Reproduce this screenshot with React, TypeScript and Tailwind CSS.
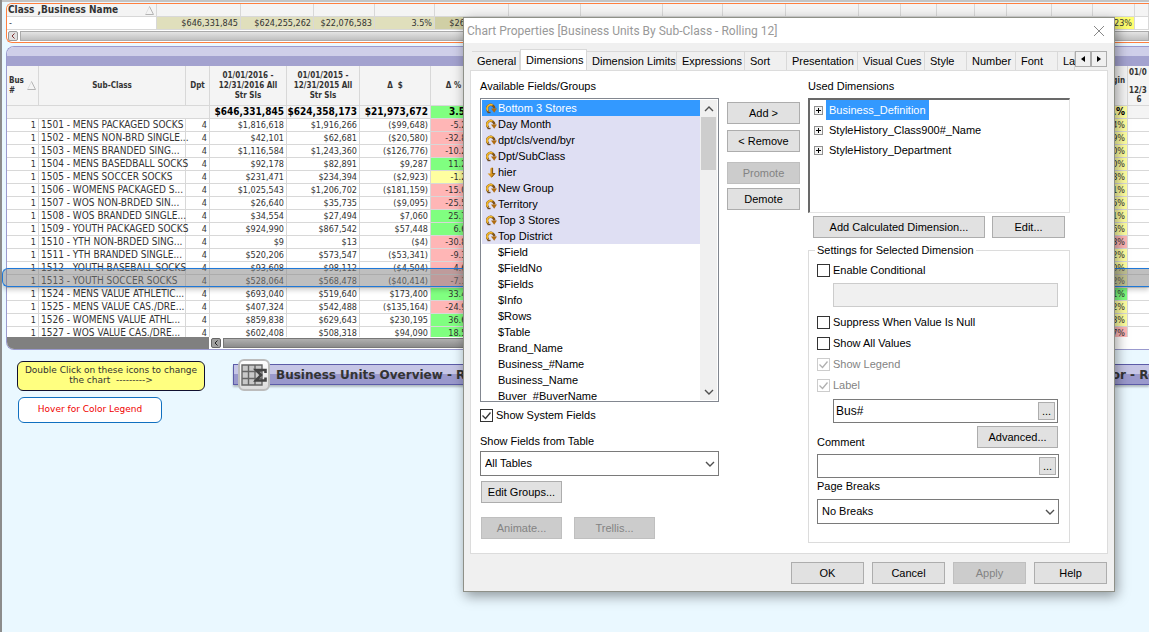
import type { ReactNode } from "react";

const DIALOG_FONT = "font-['Liberation_Sans',sans-serif]";
const SHEET_FONT = "font-['DejaVu_Sans_Condensed','DejaVu_Sans',sans-serif]";

const tones = {
  red: "bg-[#ffb6b6]",
  green: "bg-[#80ff80]",
  yellow: "bg-[#ffffa0]",
};

type Tone = keyof typeof tones;

type Row = {
  name: string;
  current: string;
  previous: string;
  delta: string;
  percent: string;
  tone: Tone;
  margin: string;
  marginTone: Tone;
};

const rows: Row[] = [
  { name: "1501 - MENS PACKAGED SOCKS", current: "$1,816,618", previous: "$1,916,266", delta: "($99,648)", percent: "-5.2%", tone: "red", margin: "0.4%", marginTone: "yellow" },
  { name: "1502 - MENS NON-BRD SINGLE...", current: "$42,101", previous: "$62,681", delta: "($20,580)", percent: "-32.8%", tone: "red", margin: "0.9%", marginTone: "yellow" },
  { name: "1503 - MENS BRANDED SING...", current: "$1,116,584", previous: "$1,243,360", delta: "($126,776)", percent: "-10.2%", tone: "red", margin: "1.0%", marginTone: "yellow" },
  { name: "1504 - MENS BASEDBALL SOCKS", current: "$92,178", previous: "$82,891", delta: "$9,287", percent: "11.2%", tone: "green", margin: "1.0%", marginTone: "yellow" },
  { name: "1505 - MENS SOCCER SOCKS", current: "$231,471", previous: "$234,394", delta: "($2,923)", percent: "-1.2%", tone: "yellow", margin: "0.8%", marginTone: "yellow" },
  { name: "1506 - WOMENS PACKAGED S...", current: "$1,025,543", previous: "$1,206,702", delta: "($181,159)", percent: "-15.0%", tone: "red", margin: "1.1%", marginTone: "yellow" },
  { name: "1507 - WOS NON-BRDED SIN...", current: "$26,640", previous: "$35,735", delta: "($9,095)", percent: "-25.5%", tone: "red", margin: "0.5%", marginTone: "yellow" },
  { name: "1508 - WOS BRANDED SINGLE...", current: "$34,554", previous: "$27,494", delta: "$7,060", percent: "25.7%", tone: "green", margin: "1.1%", marginTone: "yellow" },
  { name: "1509 - YOUTH PACKAGED SOCKS", current: "$924,990", previous: "$867,542", delta: "$57,448", percent: "6.6%", tone: "green", margin: "0.6%", marginTone: "yellow" },
  { name: "1510 - YTH NON-BRDED SING...", current: "$9", previous: "$13", delta: "($4)", percent: "-30.8%", tone: "red", margin: "3.3%", marginTone: "red" },
  { name: "1511 - YTH BRANDED SINGLE...", current: "$520,206", previous: "$573,547", delta: "($53,341)", percent: "-9.3%", tone: "red", margin: "0.2%", marginTone: "yellow" },
  { name: "1512 - YOUTH BASEBALL SOCKS", current: "$93,608", previous: "$98,112", delta: "($4,504)", percent: "-4.6%", tone: "red", margin: "1.0%", marginTone: "yellow" },
  { name: "1513 - YOUTH SOCCER SOCKS", current: "$528,064", previous: "$568,478", delta: "($40,414)", percent: "-7.1%", tone: "red", margin: "0.2%", marginTone: "yellow" },
  { name: "1524 - MENS VALUE ATHLETIC...", current: "$693,040", previous: "$519,640", delta: "$173,400", percent: "33.4%", tone: "green", margin: "3.1%", marginTone: "green" },
  { name: "1525 - MENS VALUE CAS./DRE...", current: "$407,324", previous: "$542,488", delta: "($135,164)", percent: "-24.9%", tone: "red", margin: "0.2%", marginTone: "yellow" },
  { name: "1526 - WOMENS VALUE ATHL...", current: "$859,838", previous: "$629,643", delta: "$230,195", percent: "36.6%", tone: "green", margin: "0.3%", marginTone: "yellow" },
  { name: "1527 - WOS VALUE CAS./DRE...", current: "$602,408", previous: "$508,318", delta: "$94,090", percent: "18.5%", tone: "green", margin: "4.7%", marginTone: "red" },
];

const tabs = [
  { label: "General", width: "w-[48px]" },
  { label: "Dimensions", width: "w-[67px]", active: true },
  { label: "Dimension Limits", width: "w-[90px]" },
  { label: "Expressions", width: "w-[68px]" },
  { label: "Sort", width: "w-[42px]" },
  { label: "Presentation", width: "w-[71px]" },
  { label: "Visual Cues", width: "w-[67px]" },
  { label: "Style", width: "w-[42px]" },
  { label: "Number", width: "w-[49px]" },
  { label: "Font", width: "w-[42px]" },
  { label: "La", width: "w-[17px]" },
];

const groups = ["Bottom 3 Stores", "Day Month", "dpt/cls/vend/byr", "Dpt/SubClass", "hier", "New Group", "Territory", "Top 3 Stores", "Top District"];
const fields = ["$Field", "$FieldNo", "$Fields", "$Info", "$Rows", "$Table", "Brand_Name", "Business_#Name", "Business_Name", "Buyer_#BuyerName"];
const usedDimensions = ["Business_Definition", "StyleHistory_Class900#_Name", "StyleHistory_Department"];

function CycleIcon() {
  return (
    <svg width="11" height="11" viewBox="0 0 11 11" className="shrink-0">
      <path d="M2.6 8.6A3.7 3.7 0 1 1 8.4 5.6" fill="none" stroke="#80541a" strokeWidth="2.4" />
      <path d="M2 7.8A3.8 3.8 0 0 1 6.6 2" fill="none" stroke="#f3b92c" strokeWidth="1.7" />
      <path d="M5 5.6H11L8.2 9.8Z" fill="#b06c10" />
      <path d="M1.500 9.500H4.500" stroke="#6b4a22" strokeWidth="1.4" />
    </svg>
  );
}

function DrillIcon() {
  return (
    <svg width="11" height="11" viewBox="0 0 11 11" className="shrink-0">
      <path d="M6.5 0v6h3L5.6 10.800 1.6 6.400h2.800V1.500Z" fill="#d8951f" />
      <path d="M6.6 1v5.6h2.2L5.6 10.2" fill="none" stroke="#7a4f12" strokeWidth="1" />
    </svg>
  );
}

function Chevron({ up = false }: { up?: boolean }) {
  return (
    <svg width="10" height="6" viewBox="0 0 10 6" className={up ? "rotate-180" : ""}>
      <path d="M1 1l4 4 4-4" fill="none" stroke="#505050" strokeWidth="1.4" />
    </svg>
  );
}

function SortMark() {
  return (
    <svg width="9" height="9" viewBox="0 0 9 9" className="shrink-0">
      <path d="M4.5 .5L.5 8.5" stroke="#e0e0e0" />
      <path d="M4.5 .5L8.5 8.5H.5" fill="none" stroke="#b4b4b4" />
    </svg>
  );
}

function ScrollLeft({ dark = false }: { dark?: boolean }) {
  return (
    <button
      type="button"
      aria-label="Scroll left"
      className={`flex h-[10px] w-[10px] shrink-0 items-center justify-center rounded-xs border ${dark ? "border-[#666] bg-[#a0a0a0]" : "border-[#999] bg-[#e0e0e0]"}`}
    >
      <svg width="4" height="6" viewBox="0 0 4 6">
        <path d="M3.5 .5L1 3l2.5 2.5" fill="none" stroke={dark ? "#222" : "#803030"} />
      </svg>
    </button>
  );
}

function Button({ children, width = "w-[73px]", disabled = false }: { children: ReactNode; width?: string; disabled?: boolean }) {
  return (
    <button
      type="button"
      disabled={disabled}
      className={`h-[22px] shrink-0 border text-center whitespace-nowrap ${width} ${disabled ? "border-[#bfbfbf] bg-[#ccc] text-[#838383]" : "border-[#adadad] bg-[#e1e1e1]"}`}
    >
      {children}
    </button>
  );
}

function Checkbox({ label, checked = false, disabled = false }: { label: string; checked?: boolean; disabled?: boolean }) {
  return (
    <label className={`relative flex h-[14px] items-center gap-[3px] ${disabled ? "text-[#838383]" : ""}`}>
      <input
        type="checkbox"
        defaultChecked={checked}
        disabled={disabled}
        className={`peer h-[13px] w-[13px] shrink-0 appearance-none border bg-white ${disabled ? "border-[#ccc]" : "border-[#333]"}`}
      />
      <svg width="13" height="13" viewBox="0 0 13 13" className="pointer-events-none absolute left-0 hidden peer-checked:block">
        <path d="M2.5 6.5l3 3 5-6" fill="none" stroke={disabled ? "#b0b0b0" : "#333"} strokeWidth="1.3" />
      </svg>
      {label}
    </label>
  );
}

function Dropdown({ id, value }: { id: string; value: string }) {
  return (
    <div className="relative">
      <select id={id} className="block h-[25px] w-full appearance-none border border-[#7a7a7a] bg-white px-1">
        <option>{value}</option>
      </select>
      <span className="pointer-events-none absolute inset-y-0 right-1 flex items-center">
        <Chevron />
      </span>
    </div>
  );
}

function ExpressionBox({ label, id, value = "" }: { label: string; id: string; value?: string }) {
  return (
    <div className="flex h-[24px] items-center border border-[#7a7a7a] bg-white pr-[2px]">
      <input id={id} aria-label={label} defaultValue={value} className="h-5 min-w-0 flex-1 px-[2px] text-[12px] outline-none" />
      <button type="button" aria-label={`Edit ${label}`} className="h-[18px] w-[17px] border border-[#adadad] bg-[#e1e1e1] leading-4">
        ...
      </button>
    </div>
  );
}

function SummaryPanel() {
  const base = "h-[13px] border-r border-b border-[#d8d8d8] p-0";
  const cell = `${base} pr-[2px] text-right`;
  const hidden = ["w-[72px]", "w-[82px]", "w-[60px]", "w-[63px]", "w-[73px]", "w-[42px]", "w-[36px]", "w-[38px]", "w-[32px]", "w-[45px]"];
  return (
    <section className="overflow-hidden rounded-l-md border border-r-0 border-[#ff7f3f] bg-white">
      <table className="w-full table-fixed border-separate border-spacing-0 text-[9px] leading-[12px] whitespace-nowrap text-[#333]">
        <thead>
          <tr className="bg-[#f4f4f4]">
            <th className={`${cell} w-[150px] text-[10px]`}>
              <div className="flex items-center justify-between pl-px">
                Class ,Business Name
                <SortMark />
              </div>
            </th>
            <th className={`${cell} w-[84px]`} />
            <th className={`${cell} w-[73px]`} />
            <th className={`${cell} w-[61px]`} />
            <th className={`${cell} w-[60px]`} />
            <th className={`${cell} w-[74px]`} />
            {hidden.map((width, i) => (
              <th key={i} className={`${cell} ${width}`} />
            ))}
            <th className={cell} />
            <th className={`${cell} w-[42px]`} />
            <th className={`${cell} w-[14px]`} />
          </tr>
        </thead>
        <tbody>
          <tr>
            <td className={`${base} text-left`}>
              <span className="pl-[2px]">-</span>
            </td>
            <td className={`${cell} bg-[#e0dfbc]`}>$646,331,845</td>
            <td className={`${cell} bg-[#e0dfbc]`}>$624,255,262</td>
            <td className={`${cell} bg-[#e0dfbc]`}>$22,076,583</td>
            <td className={`${cell} bg-[#e0dfbc]`}>3.5%</td>
            <td className={`${cell} bg-[#d0cfa5]`}>$264,071,182</td>
            {hidden.map((_, i) => (
              <td key={i} className={cell} />
            ))}
            <td className={cell} />
            <td className={`${cell} bg-[#ffff70]`}>0.23%</td>
            <td className={cell} />
          </tr>
        </tbody>
      </table>
      <div className="flex h-[12px] items-center gap-[2px] pl-px">
        <ScrollLeft />
        <div className="h-[10px] flex-1 border border-[#aaa] bg-linear-to-b from-[#e4e4e4] to-[#c0c0c0]" />
      </div>
    </section>
  );
}

function SubClassPanel() {
  const head = "h-[40px] border-r border-b border-[#d8d8d8] px-[2px] py-0 text-center font-bold";
  const base = "h-[13px] border-b border-[#d8d8d8] p-0";
  const cell = `${base} border-r pr-[2px] text-right`;
  return (
    <section className="relative">
      <div className="overflow-hidden rounded-l-lg border border-r-0 border-[#9a9ace] bg-white">
        <div className="h-[19px] bg-linear-to-b from-[#cfcfe9] from-45% to-[#a3a2cf] to-50%" />
        <div className="h-[271px] overflow-hidden">
          <table className="w-full table-fixed border-separate border-spacing-0 text-[9px] leading-[12px] whitespace-nowrap text-[#333]">
            <thead>
              <tr className="bg-[#f4f4f4] text-[8px] leading-[10px]">
                <th className={`${head} w-[32px]`}>
                  <div className="flex items-center justify-between text-left">
                    <span>
                      Bus
                      <br />#
                    </span>
                    <SortMark />
                  </div>
                </th>
                <th className={`${head} w-[147px]`}>Sub-Class</th>
                <th className={`${head} w-[24px]`}>Dpt</th>
                <th className={`${head} w-[77px]`}>
                  01/01/2016 -<br />
                  12/31/2016 All
                  <br />
                  Str Sls
                </th>
                <th className={`${head} w-[73px]`}>
                  01/01/2015 -<br />
                  12/31/2015 All
                  <br />
                  Str Sls
                </th>
                <th className={`${head} w-[71px]`}>Δ&nbsp; $</th>
                <th className={`${head} w-[46px]`}>Δ %</th>
                <th className={head} />
                <th className={`${head} w-[44px]`}>
                  <div className="pb-[10px] text-right">Margin</div>
                </th>
                <th className="h-[40px] w-[21px] border-b border-[#d8d8d8] py-0 pr-0 pl-px text-left leading-[9px] font-bold">
                  01/0
                  <br />
                  <br />
                  12/3
                  <br />
                  &nbsp;&nbsp; 6
                </th>
              </tr>
            </thead>
            <tbody>
              <tr className="bg-[#f4f4f4] text-[10px] font-bold text-black">
                <td className={base} />
                <td className={base} />
                <td className={cell} />
                <td className={cell}>$646,331,845</td>
                <td className={cell}>$624,358,173</td>
                <td className={cell}>$21,973,672</td>
                <td className={`${cell} ${tones.green}`}>3.5%</td>
                <td className={cell} />
                <td className={`${cell} ${tones.yellow}`}>0.1%</td>
                <td className={base} />
              </tr>
              {rows.map((row) => (
                <tr key={row.name}>
                  <td className={cell}>1</td>
                  <td className={`${base} border-r text-left text-[10px]`}>
                    <span className="pl-[2px]">{row.name}</span>
                  </td>
                  <td className={cell}>4</td>
                  <td className={cell}>{row.current}</td>
                  <td className={cell}>{row.previous}</td>
                  <td className={cell}>{row.delta}</td>
                  <td className={`${cell} ${tones[row.tone]}`}>{row.percent}</td>
                  <td className={cell} />
                  <td className={`${cell} ${tones[row.marginTone]}`}>{row.margin}</td>
                  <td className={base} />
                </tr>
              ))}
            </tbody>
          </table>
        </div>
        <div className="flex h-[12px] items-center gap-[2px]">
          <div className="h-full w-[202px] shrink-0 bg-[#808080]" />
          <ScrollLeft dark />
          <div className="h-[10px] w-2/3 border border-[#777] bg-linear-to-b from-[#b0b0b0] to-[#8c8c8c]" />
        </div>
      </div>
      <div className="absolute top-[222px] right-0 -left-1 h-[19px] rounded-l-md border border-r-0 border-[#1f78d8] bg-[#808080]/50 shadow-[0_3px_5px_rgba(0,0,0,0.2)]" />
    </section>
  );
}

function ChartBar({ title, children }: { title: string; children?: ReactNode }) {
  return (
    <div className="flex h-[21px] items-center gap-[6px] border border-r-0 border-[#5c5ca8] bg-linear-to-b from-[#c6c6e6] from-45% to-[#9a99cc] to-50% pl-1 shadow-[0_2px_2px_rgba(0,0,0,0.25)]">
      {children}
      <h2 className="font-['DejaVu_Sans',sans-serif] text-[12px] font-bold whitespace-nowrap text-[#333]">{title}</h2>
    </div>
  );
}

function MinimizedCharts() {
  return (
    <section className="flex items-start pt-[11px] pl-[11px]">
      <div className="flex w-[188px] flex-col items-start gap-[6px] font-['DejaVu_Sans',sans-serif]">
        <p className="h-[30px] w-full rounded-md border border-[#101030] bg-[#ffff80] pt-[3px] text-center text-[9px] leading-[10px] text-[#333]">
          Double Click on these icons to change
          <br />
          the chart &nbsp;---------&gt;
        </p>
        <button type="button" className="ml-px h-[26px] w-[144px] rounded-md border border-[#1070c0] bg-white text-[9px] text-[#f00000]">
          Hover for Color Legend
        </button>
      </div>
      <div className="ml-[28px] min-w-0 flex-1 pt-[3px]">
        <ChartBar title="Business Units Overview - Rolling 12">
          <button type="button" aria-label="Restore chart" className="flex h-[32px] w-[32px] shrink-0 items-center justify-center rounded-md border-2 border-[#bcbcbc] bg-linear-to-b from-white to-[#dcdcdc]">
            <svg width="26" height="24" viewBox="0 0 26 24">
              <path d="M1 2h20v20H1zM1 8.500h20M1 15.500h20M7.500 2v20M14 2v20" fill="#c8c8c8" stroke="#666" strokeWidth="1.4" />
              <path d="M24.500 10V7H15l5 5-5 5.500h9.500v-3" fill="none" stroke="#444" strokeWidth="2.600" />
            </svg>
          </button>
        </ChartBar>
      </div>
      <div className="w-[84px] shrink-0 overflow-hidden pt-[3px] pb-2">
        <ChartBar title="by Color - Ro" />
      </div>
    </section>
  );
}

function AvailableFields() {
  return (
    <div className="flex w-[239px] flex-col">
      <h3 className="h-4 leading-4">Available Fields/Groups</h3>
      <div className="mt-1 flex h-[304px] border border-[#828790] bg-white p-px">
        <ul className="flex-1 overflow-hidden leading-4">
          {groups.map((name, i) => (
            <li key={name} className={`flex h-4 items-center gap-px pl-[4px] ${i === 0 ? "bg-[#3399ff] text-white" : "bg-[#dfdff3]"}`}>
              {name === "hier" ? <DrillIcon /> : <CycleIcon />}
              {name}
            </li>
          ))}
          {fields.map((name) => (
            <li key={name} className="h-4 pl-4">
              {name}
            </li>
          ))}
        </ul>
        <div className="flex w-[17px] flex-col items-center bg-[#f0f0f0]">
          <div className="flex h-[17px] items-center">
            <Chevron up />
          </div>
          <div className="h-[53px] w-[15px] bg-[#cdcdcd]" />
          <div className="mt-auto flex h-[17px] items-center">
            <Chevron />
          </div>
        </div>
      </div>
      <div className="mt-[6px]">
        <Checkbox label="Show System Fields" checked />
      </div>
      <label htmlFor="table" className="mt-[11px] mb-[2px] h-4 leading-4">
        Show Fields from Table
      </label>
      <Dropdown id="table" value="All Tables" />
      <div className="mt-[5px] ml-px">
        <Button width="w-[81px]">Edit Groups...</Button>
      </div>
      <div className="mt-[14px] ml-px flex gap-3">
        <Button width="w-[81px]" disabled>
          Animate...
        </Button>
        <Button width="w-[81px]" disabled>
          Trellis...
        </Button>
      </div>
    </div>
  );
}

function UsedDimensions() {
  return (
    <div className="flex w-[262px] flex-col">
      <h3 className="h-4 leading-4">Used Dimensions</h3>
      <ul className="mt-1 h-[115px] border-2 border-r border-b border-[#696969] border-r-[#e3e3e3] border-b-[#e3e3e3] bg-white">
        {usedDimensions.map((name, i) => (
          <li key={name} className="flex h-5 items-center gap-[3px] pl-1">
            <button type="button" aria-label={`Expand ${name}`} className="flex h-[9px] w-[9px] items-center justify-center border border-[#919191] bg-[#f4f4f4]">
              <svg width="5" height="5" viewBox="0 0 5 5" className="shrink-0">
                <path d="M0 2.500h5M2.500 0v5" stroke="#000" />
              </svg>
            </button>
            <span className={`h-5 px-[3px] leading-5 ${i === 0 ? "bg-[#3399ff] text-white" : ""}`}>{name}</span>
          </li>
        ))}
      </ul>
      <div className="mt-[3px] ml-[5px] flex gap-[7px]">
        <Button width="w-[172px]">Add Calculated Dimension...</Button>
        <Button>Edit...</Button>
      </div>
      <fieldset className="mt-1 h-[301px] border border-[#dcdcdc] px-2">
        <legend className="ml-[-2px] h-4 px-[2px] leading-4">Settings for Selected Dimension</legend>
        <div className="mt-[5px] flex flex-col">
          <Checkbox label="Enable Conditional" />
          <input disabled aria-label="Condition" className="mt-[6px] ml-4 h-[24px] w-[225px] border border-[#ccc] bg-[#f0f0f0]" />
          <div className="mt-2 flex flex-col gap-[7px]">
            <Checkbox label="Suppress When Value Is Null" />
            <Checkbox label="Show All Values" />
            <Checkbox label="Show Legend" checked disabled />
            <Checkbox label="Label" checked disabled />
          </div>
          <div className="mt-[7px] ml-4 w-[225px]">
            <ExpressionBox id="label" label="Label" value="Bus#" />
          </div>
          <div className="mt-[3px] flex w-[241px] items-end justify-between">
            <label htmlFor="comment" className="leading-3">
              Comment
            </label>
            <Button width="w-[81px]">Advanced...</Button>
          </div>
          <div className="mt-[6px] w-[242px]">
            <ExpressionBox id="comment" label="Comment" />
          </div>
          <label htmlFor="breaks" className="mb-[5px] h-4 leading-4">
            Page Breaks
          </label>
          <div className="w-[242px]">
            <Dropdown id="breaks" value="No Breaks" />
          </div>
        </div>
      </fieldset>
    </div>
  );
}

function ChartProperties() {
  return (
    <div
      role="dialog"
      aria-label="Chart Properties"
      className={`absolute top-[17px] left-[461px] w-[652px] border border-[#8e9088] bg-[#f0f0f0] text-[11px] text-black shadow-[2px_4px_12px_rgba(0,0,0,0.4)] ${DIALOG_FONT}`}
    >
      <header className="flex h-[25px] items-center justify-between bg-white pr-2 pl-[3px] text-[#999]">
        <h1 className="font-['Roboto',sans-serif] text-[12px] whitespace-nowrap">Chart Properties [Business Units By Sub-Class - Rolling 12]</h1>
        <button type="button" aria-label="Close">
          <svg width="14" height="14" viewBox="0 0 14 14">
            <path d="M2 2l10 10M12 2L2 12" stroke="#888" />
          </svg>
        </button>
      </header>
      <div className="px-[6px] pt-[6px]">
        <div role="tablist" className="flex h-[21px] items-end pl-[2px]">
          {tabs.map((tab) => (
            <button
              key={tab.label}
              type="button"
              role="tab"
              aria-selected={!!tab.active}
              className={`shrink-0 border-t border-r border-[#d9d9d9] pl-[5px] text-left whitespace-nowrap ${tab.width} ${tab.active ? "h-[21px] border-l bg-white" : "h-[19px] pt-px"}`}
            >
              {tab.label}
            </button>
          ))}
          <div className="mb-[3px] flex h-4">
            <button type="button" aria-label="Previous tabs" className="flex w-4 items-center justify-center border border-[#adadad] bg-[#f0f0f0]">
              <svg width="4" height="6" viewBox="0 0 4 6">
                <path d="M4 0v6L0 3Z" />
              </svg>
            </button>
            <button type="button" aria-label="Next tabs" className="flex w-4 items-center justify-center border border-[#adadad] bg-[#f0f0f0]">
              <svg width="4" height="6" viewBox="0 0 4 6">
                <path d="M0 0v6L4 3Z" />
              </svg>
            </button>
          </div>
        </div>
        <div className="flex h-[484px] gap-2 border border-[#dcdcdc] bg-white pt-[7px] pl-[9px]">
          <AvailableFields />
          <div className="flex flex-col pt-6">
            <Button>Add &gt;</Button>
            <div className="mt-[6px]">
              <Button>&lt; Remove</Button>
            </div>
            <div className="mt-[10px] flex flex-col gap-1">
              <Button disabled>Promote</Button>
              <Button>Demote</Button>
            </div>
          </div>
          <UsedDimensions />
        </div>
      </div>
      <footer className="flex justify-end gap-2 px-[7px] pt-2 pb-[7px]">
        <Button>OK</Button>
        <Button>Cancel</Button>
        <Button disabled>Apply</Button>
        <Button>Help</Button>
      </footer>
    </div>
  );
}

export default function App() {
  return (
    <main className={`relative min-h-screen overflow-hidden border-l-2 border-[#8c8c8c] bg-[#eaf8ff] ${SHEET_FONT}`}>
      <div className="h-[2px] bg-[#c4c4c4]" />
      <div className="flex flex-col pt-px pl-1">
        <SummaryPanel />
        <div className="mt-[3px]">
          <SubClassPanel />
        </div>
        <MinimizedCharts />
      </div>
      <ChartProperties />
    </main>
  );
}
